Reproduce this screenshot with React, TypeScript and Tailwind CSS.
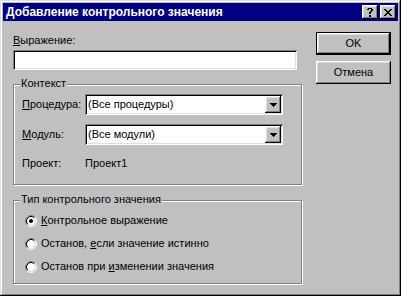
import React from "react";

const raised =
  "shadow-[inset_-1px_-1px_#000,inset_1px_1px_#fff,inset_-2px_-2px_#808080,inset_2px_2px_#dfdfdf]";
const sunken =
  "shadow-[inset_1px_1px_#808080,inset_-1px_-1px_#fff,inset_2px_2px_#000,inset_-2px_-2px_#dfdfdf]";

function HelpGlyph() {
  return (
    <svg width="6" height="9" viewBox="0 0 6 9" shapeRendering="crispEdges">
      <path
        d="M1 0h4v1H1zM0 1h2v1H0zM4 1h2v1H4zM4 2h2v1H4zM3 3h2v1H3zM2 4h2v1H2zM2 5h2v1H2zM2 7h2v2H2z"
        fill="#000"
      />
    </svg>
  );
}

function CloseGlyph() {
  return (
    <svg width="8" height="7" viewBox="0 0 8 7" shapeRendering="crispEdges">
      <path
        d="M0 0h2v1H0zM6 0h2v1H6zM1 1h2v1H1zM5 1h2v1H5zM2 2h4v1H2zM3 3h2v1H3zM2 4h4v1H2zM1 5h2v1H1zM5 5h2v1H5zM0 6h2v1H0zM6 6h2v1H6z"
        fill="#000"
      />
    </svg>
  );
}

function Arrow() {
  return (
    <svg width="7" height="4" viewBox="0 0 7 4" shapeRendering="crispEdges">
      <path d="M0 0h7v1H0zM1 1h5v1H1zM2 2h3v1H2zM3 3h1v1H3z" fill="#000" />
    </svg>
  );
}

function Radio({ checked }: { checked?: boolean }) {
  return (
    <svg width="12" height="12" viewBox="0 0 12 12" className="shrink-0">
      <circle cx="6" cy="6" r="4" fill="#fff" />
      <path d="M2.11 9.89A5.5 5.5 0 0 1 9.89 2.11" stroke="#808080" strokeWidth="1" fill="none" />
      <path d="M9.89 2.11A5.5 5.5 0 0 1 2.11 9.89" stroke="#fff" strokeWidth="1" fill="none" />
      <path d="M2.82 9.18A4.5 4.5 0 0 1 9.18 2.82" stroke="#000" strokeWidth="1" fill="none" />
      <path d="M9.18 2.82A4.5 4.5 0 0 1 2.82 9.18" stroke="#dfdfdf" strokeWidth="1" fill="none" />
      {checked && <circle cx="6" cy="6" r="2" fill="#000" />}
    </svg>
  );
}

function Combo({ value }: { value: string }) {
  return (
    <div className={`w-[198px] h-[21px] p-[2px] flex bg-white ${sunken}`}>
      <div className="flex-1 pl-[1px] leading-[17px] bg-white">{value}</div>
      <div className={`w-[16px] h-[17px] bg-[#c0c0c0] flex items-center justify-center ${raised}`}>
        <Arrow />
      </div>
    </div>
  );
}

function Group({
  label,
  className,
  children,
}: {
  label: string;
  className: string;
  children: React.ReactNode;
}) {
  return (
    <div
      className={`relative w-[289px] border border-[#808080] shadow-[1px_1px_0_#fff,inset_1px_1px_0_#fff] ${className}`}
    >
      <span className="absolute left-[6px] top-[-8px] px-[1px] bg-[#c0c0c0] leading-[13px]">
        {label}
      </span>
      {children}
    </div>
  );
}

export default function App() {
  return (
    <div
      className="w-[401px] h-[296px] bg-[#c0c0c0] p-[3px] flex flex-col text-[11px] text-black shadow-[inset_-1px_-1px_#000,inset_1px_1px_#dfdfdf,inset_-2px_-2px_#808080,inset_2px_2px_#fff]"
      style={{ fontFamily: '"Liberation Sans", Arial, sans-serif' }}
    >
      <div className="h-[18px] bg-[#000080] flex items-center pl-[3px] pr-[2px]">
        <span className="text-white font-bold text-[12px] leading-[14px]">
          Добавление контрольного значения
        </span>
        <div className="ml-auto flex gap-[2px]">
          <div className={`w-[16px] h-[14px] bg-[#c0c0c0] flex items-center justify-center ${raised}`}>
            <HelpGlyph />
          </div>
          <div className={`w-[16px] h-[14px] bg-[#c0c0c0] flex items-center justify-center ${raised}`}>
            <CloseGlyph />
          </div>
        </div>
      </div>

      <div className="flex">
        <div className="ml-[10px] w-[290px] flex flex-col">
          <div className="mt-[13px] h-[13px] leading-[13px]">
            <u>В</u>ыражение:
          </div>
          <div className={`mt-[3px] w-[284px] h-[20px] bg-white ${sunken}`} />

          <Group label="Контекст" className="mt-[14px] h-[101px] pt-[9px] pl-[8px]">
            <div className="flex items-center h-[21px]">
              <div className="w-[63px]">
                <u>П</u>роцедура:
              </div>
              <Combo value="(Все процедуры)" />
            </div>
            <div className="flex items-center h-[21px] mt-[9px]">
              <div className="w-[63px]">
                <u>М</u>одуль:
              </div>
              <Combo value="(Все модули)" />
            </div>
            <div className="flex h-[13px] leading-[13px] mt-[12px]">
              <div className="w-[63px]">Проект:</div>
              <div>Проект1</div>
            </div>
          </Group>

          <Group
            label="Тип контрольного значения"
            className="mt-[15px] h-[84px] pt-[8px] pl-[11px]"
          >
            <div className="flex items-center h-[23px] gap-[4px]">
              <Radio checked />
              <span>
                <u>К</u>онтрольное выражение
              </span>
            </div>
            <div className="flex items-center h-[23px] gap-[4px]">
              <Radio />
              <span>
                Останов, <u>е</u>сли значение истинно
              </span>
            </div>
            <div className="flex items-center h-[23px] gap-[4px]">
              <Radio />
              <span>
                Останов при <u>и</u>зменении значения
              </span>
            </div>
          </Group>
        </div>

        <div className="ml-[13px] w-[75px] pt-[11px] flex flex-col gap-[6px]">
          <div
            className="w-[75px] h-[23px] flex items-center justify-center shadow-[inset_-2px_-2px_#000,inset_1px_1px_#000,inset_2px_2px_#fff,inset_-3px_-3px_#808080,inset_3px_3px_#dfdfdf]"
          >
            OK
          </div>
          <div className={`w-[75px] h-[23px] flex items-center justify-center ${raised}`}>
            Отмена
          </div>
        </div>
      </div>
    </div>
  );
}
